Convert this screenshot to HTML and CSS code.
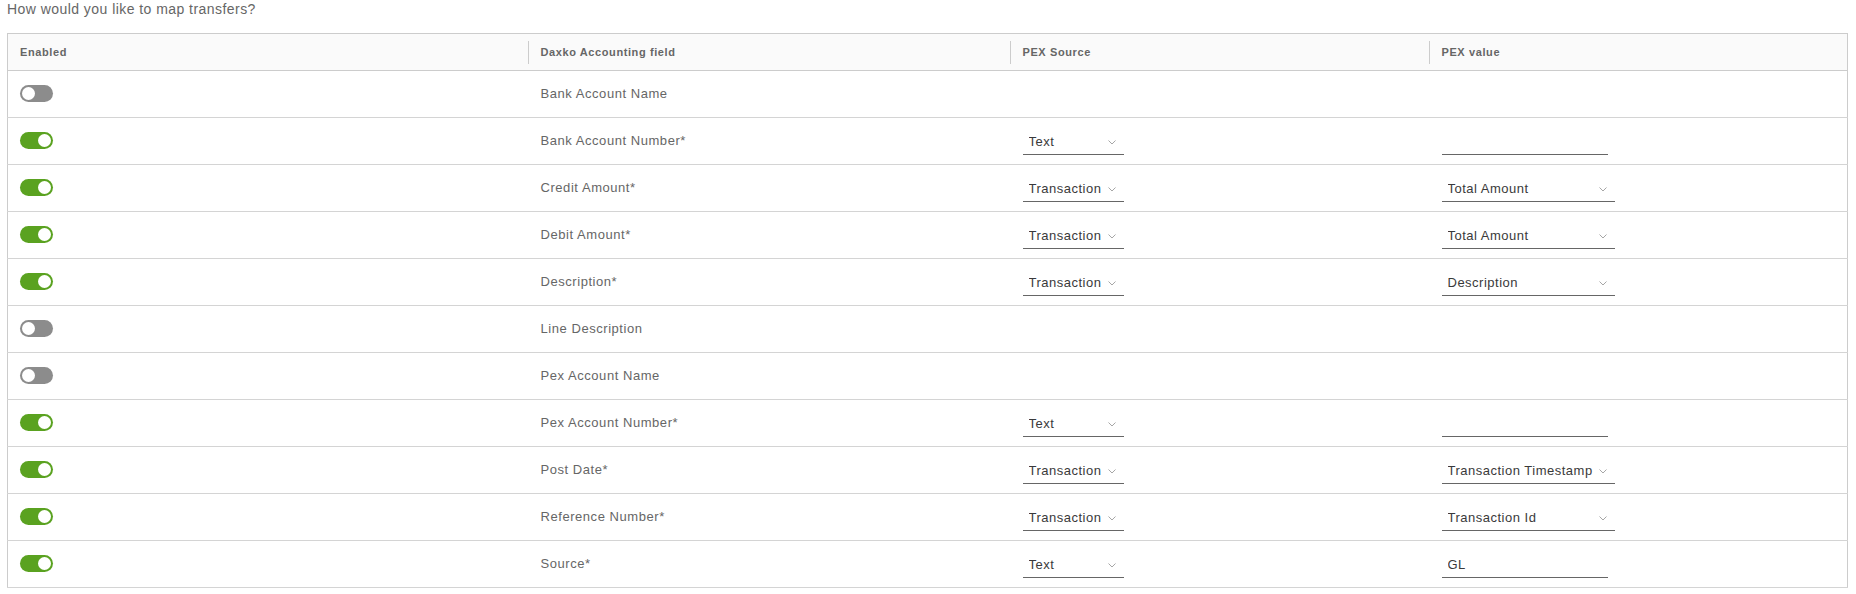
FILE: index.html
```html
<!DOCTYPE html>
<html lang="en">
<head>
    <meta charset="UTF-8">
    <meta name="viewport" content="width=device-width, initial-scale=1.0">
    <title>Transfer mapping</title>
    <link rel="stylesheet" href="styles.css">
</head>
<body>
    <h3 class="title">How would you like to map transfers?</h3>
    <table class="mapping">
        <colgroup>
            <col class="col-enabled">
            <col class="col-field">
            <col class="col-source">
            <col>
        </colgroup>
        <thead>
            <tr>
                <th>Enabled</th>
                <th>Daxko Accounting field</th>
                <th>PEX Source</th>
                <th>PEX value</th>
            </tr>
        </thead>
        <tbody>
            <tr>
                <td><label class="toggle"><input type="checkbox"><span class="track"></span></label></td>
                <td>Bank Account Name</td>
                <td></td>
                <td></td>
            </tr>
            <tr>
                <td><label class="toggle"><input type="checkbox" checked><span class="track"></span></label></td>
                <td>Bank Account Number*</td>
                <td>
                    <div class="select source">
                        <select><option>Text</option><option>Transaction</option></select>
                        <svg viewBox="0 0 8 5"><path d="M0.5 0.5 L4 4 L7.5 0.5"/></svg>
                    </div>
                </td>
                <td><input class="text-input" type="text" value=""></td>
            </tr>
            <tr>
                <td><label class="toggle"><input type="checkbox" checked><span class="track"></span></label></td>
                <td>Credit Amount*</td>
                <td>
                    <div class="select source">
                        <select><option>Transaction</option><option>Text</option></select>
                        <svg viewBox="0 0 8 5"><path d="M0.5 0.5 L4 4 L7.5 0.5"/></svg>
                    </div>
                </td>
                <td>
                    <div class="select value">
                        <select><option>Total Amount</option></select>
                        <svg viewBox="0 0 8 5"><path d="M0.5 0.5 L4 4 L7.5 0.5"/></svg>
                    </div>
                </td>
            </tr>
            <tr>
                <td><label class="toggle"><input type="checkbox" checked><span class="track"></span></label></td>
                <td>Debit Amount*</td>
                <td>
                    <div class="select source">
                        <select><option>Transaction</option><option>Text</option></select>
                        <svg viewBox="0 0 8 5"><path d="M0.5 0.5 L4 4 L7.5 0.5"/></svg>
                    </div>
                </td>
                <td>
                    <div class="select value">
                        <select><option>Total Amount</option></select>
                        <svg viewBox="0 0 8 5"><path d="M0.5 0.5 L4 4 L7.5 0.5"/></svg>
                    </div>
                </td>
            </tr>
            <tr>
                <td><label class="toggle"><input type="checkbox" checked><span class="track"></span></label></td>
                <td>Description*</td>
                <td>
                    <div class="select source">
                        <select><option>Transaction</option><option>Text</option></select>
                        <svg viewBox="0 0 8 5"><path d="M0.5 0.5 L4 4 L7.5 0.5"/></svg>
                    </div>
                </td>
                <td>
                    <div class="select value">
                        <select><option>Description</option></select>
                        <svg viewBox="0 0 8 5"><path d="M0.5 0.5 L4 4 L7.5 0.5"/></svg>
                    </div>
                </td>
            </tr>
            <tr>
                <td><label class="toggle"><input type="checkbox"><span class="track"></span></label></td>
                <td>Line Description</td>
                <td></td>
                <td></td>
            </tr>
            <tr>
                <td><label class="toggle"><input type="checkbox"><span class="track"></span></label></td>
                <td>Pex Account Name</td>
                <td></td>
                <td></td>
            </tr>
            <tr>
                <td><label class="toggle"><input type="checkbox" checked><span class="track"></span></label></td>
                <td>Pex Account Number*</td>
                <td>
                    <div class="select source">
                        <select><option>Text</option><option>Transaction</option></select>
                        <svg viewBox="0 0 8 5"><path d="M0.5 0.5 L4 4 L7.5 0.5"/></svg>
                    </div>
                </td>
                <td><input class="text-input" type="text" value=""></td>
            </tr>
            <tr>
                <td><label class="toggle"><input type="checkbox" checked><span class="track"></span></label></td>
                <td>Post Date*</td>
                <td>
                    <div class="select source">
                        <select><option>Transaction</option><option>Text</option></select>
                        <svg viewBox="0 0 8 5"><path d="M0.5 0.5 L4 4 L7.5 0.5"/></svg>
                    </div>
                </td>
                <td>
                    <div class="select value">
                        <select><option>Transaction Timestamp</option></select>
                        <svg viewBox="0 0 8 5"><path d="M0.5 0.5 L4 4 L7.5 0.5"/></svg>
                    </div>
                </td>
            </tr>
            <tr>
                <td><label class="toggle"><input type="checkbox" checked><span class="track"></span></label></td>
                <td>Reference Number*</td>
                <td>
                    <div class="select source">
                        <select><option>Transaction</option><option>Text</option></select>
                        <svg viewBox="0 0 8 5"><path d="M0.5 0.5 L4 4 L7.5 0.5"/></svg>
                    </div>
                </td>
                <td>
                    <div class="select value">
                        <select><option>Transaction Id</option></select>
                        <svg viewBox="0 0 8 5"><path d="M0.5 0.5 L4 4 L7.5 0.5"/></svg>
                    </div>
                </td>
            </tr>
            <tr>
                <td><label class="toggle"><input type="checkbox" checked><span class="track"></span></label></td>
                <td>Source*</td>
                <td>
                    <div class="select source">
                        <select><option>Text</option><option>Transaction</option></select>
                        <svg viewBox="0 0 8 5"><path d="M0.5 0.5 L4 4 L7.5 0.5"/></svg>
                    </div>
                </td>
                <td><input class="text-input" type="text" value="GL"></td>
            </tr>
        </tbody>
    </table>
</body>
</html>
```

FILE: styles.css
```css
body {
    margin: 0;
    padding: 0 8px 0 7px;
    font-family: "Liberation Sans", Arial, sans-serif;
    color: #5c5c5c;
}
.title {
    margin: 0;
    height: 33px;
    font-size: 14px;
    line-height: 18px;
    font-weight: normal;
    color: #666;
    letter-spacing: 0.45px;
}
.mapping {
    width: 100%;
    border-collapse: collapse;
    table-layout: fixed;
    border: 1px solid #ccc;
}
.col-enabled {
    width: 520px;
}
.col-field {
    width: 482px;
}
.col-source {
    width: 419px;
}
.mapping th {
    height: 36px;
    padding: 0 13px;
    background-color: #fafafa;
    border-bottom: 1px solid #ccc;
    font-size: 11px;
    font-weight: bold;
    color: #666;
    text-align: left;
    position: relative;
    letter-spacing: 0.6px;
}
.mapping th:first-child {
    padding-left: 12px;
}
/* 表头之间的竖线 */
.mapping th + th::before {
    content: '';
    position: absolute;
    left: 0;
    top: 7px;
    bottom: 6px;
    width: 1px;
    background-color: #ccc;
}
.mapping td {
    height: 45px;
    padding: 0 13px 1px;
    border-bottom: 1px solid #d4d4d4;
    font-size: 13px;
    color: #666;
    letter-spacing: 0.55px;
    vertical-align: middle;
}
.mapping td:first-child {
    padding-left: 12px;
}
.toggle {
    display: inline-block;
    vertical-align: middle;
    cursor: pointer;
}
.toggle input {
    display: none;
}
.toggle .track {
    display: block;
    width: 33px;
    height: 17px;
    border-radius: 9px;
    background-color: #8c8c8c;
    position: relative;
}
.toggle .track::after {
    content: '';
    position: absolute;
    top: 2px;
    left: 2px;
    width: 13px;
    height: 13px;
    border-radius: 50%;
    background-color: #fff;
    transition: left .2s;
}
.toggle input:checked + .track {
    background-color: #5aa220;
}
.toggle input:checked + .track::after {
    left: 18px;
}
.select {
    position: relative;
    height: 24px;
    border-bottom: 1px solid #666;
    margin-top: 3px;
}
.select.source {
    width: 101px;
}
.select.value {
    width: 173px;
}
.select select {
    appearance: none;
    -webkit-appearance: none;
    width: 100%;
    height: 24px;
    border: none;
    outline: none;
    background: transparent;
    padding: 0 0 0 6px;
    font-family: inherit;
    font-size: 13px;
    letter-spacing: 0.5px;
    color: #3a3a3a;
    cursor: pointer;
}
.select svg {
    position: absolute;
    right: 8px;
    top: 10px;
    width: 8px;
    height: 5px;
    fill: none;
    stroke: #a6a6a6;
    stroke-width: 1;
    pointer-events: none;
}
.text-input {
    display: block;
    width: 166px;
    height: 25px;
    margin-top: 3px;
    box-sizing: border-box;
    border: none;
    border-bottom: 1px solid #666;
    outline: none;
    padding: 0 0 0 6px;
    font-family: inherit;
    font-size: 13px;
    letter-spacing: 0.5px;
    color: #3a3a3a;
    background: transparent;
}
```
